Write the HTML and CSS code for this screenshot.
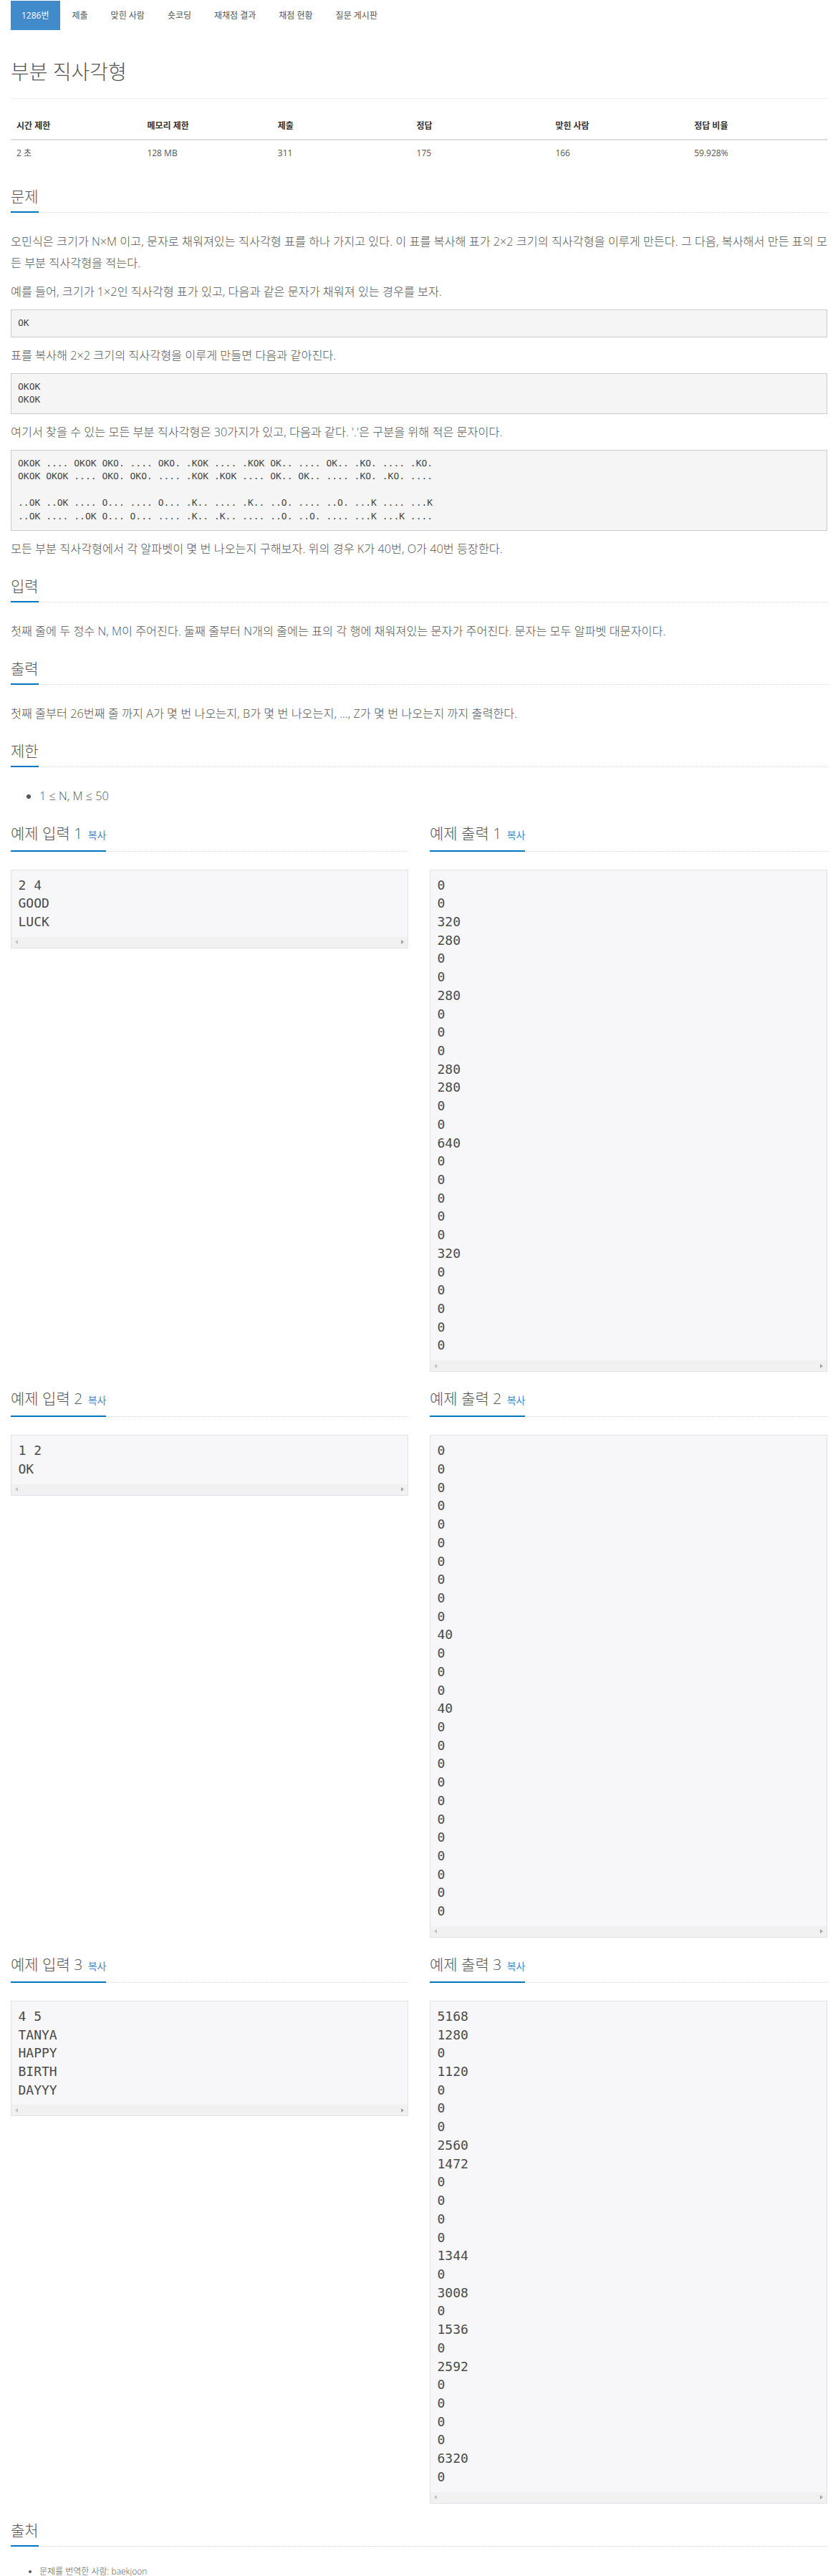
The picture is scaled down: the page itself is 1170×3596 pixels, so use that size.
FILE: index.html
```
<!DOCTYPE html>
<html lang="ko">
<head>
<meta charset="utf-8">
<title>부분 직사각형</title>
<link rel="stylesheet" href="styles.css">
</head>
<body>
<div class="container">
  <ul class="nav">
    <li class="active"><a>1286번</a></li>
    <li><a>제출</a></li>
    <li><a>맞힌 사람</a></li>
    <li><a>숏코딩</a></li>
    <li><a>재채점 결과</a></li>
    <li><a>채점 현황</a></li>
    <li><a>질문 게시판</a></li>
  </ul>

  <div class="page-header"><h1>부분 직사각형</h1></div>

  <table class="info">
    <thead>
      <tr><th class="w16">시간 제한</th><th class="w16">메모리 제한</th><th class="w17">제출</th><th class="w17">정답</th><th class="w17">맞힌 사람</th><th class="w17">정답 비율</th></tr>
    </thead>
    <tbody>
      <tr><td>2 초</td><td>128 MB</td><td>311</td><td>175</td><td>166</td><td>59.928%</td></tr>
    </tbody>
  </table>

  <section class="sec">
    <div class="headline"><h2>문제</h2></div>
    <div class="text">
      <p>오민식은 크기가 N×M 이고, 문자로 채워져있는 직사각형 표를 하나 가지고 있다. 이 표를 복사해 표가 2×2 크기의 직사각형을 이루게 만든다. 그 다음, 복사해서 만든 표의 모든 부분 직사각형을 적는다.</p>
      <p>예를 들어, 크기가 1×2인 직사각형 표가 있고, 다음과 같은 문자가 채워져 있는 경우를 보자.</p>
      <pre class="code">OK</pre>
      <p>표를 복사해 2×2 크기의 직사각형을 이루게 만들면 다음과 같아진다.</p>
      <pre class="code">OKOK
OKOK</pre>
      <p>여기서 찾을 수 있는 모든 부분 직사각형은 30가지가 있고, 다음과 같다. '.'은 구분을 위해 적은 문자이다.</p>
      <pre class="code">OKOK .... OKOK OKO. .... OKO. .KOK .... .KOK OK.. .... OK.. .KO. .... .KO.
OKOK OKOK .... OKO. OKO. .... .KOK .KOK .... OK.. OK.. .... .KO. .KO. ....

..OK ..OK .... O... .... O... .K.. .... .K.. ..O. .... ..O. ...K .... ...K
..OK .... ..OK O... O... .... .K.. .K.. .... ..O. ..O. .... ...K ...K ....</pre>
      <p>모든 부분 직사각형에서 각 알파벳이 몇 번 나오는지 구해보자. 위의 경우 K가 40번, O가 40번 등장한다.</p>
    </div>
  </section>

  <section class="sec">
    <div class="headline"><h2>입력</h2></div>
    <div class="text">
      <p>첫째 줄에 두 정수 N, M이 주어진다. 둘째 줄부터 N개의 줄에는 표의 각 행에 채워져있는 문자가 주어진다. 문자는 모두 알파벳 대문자이다.</p>
    </div>
  </section>

  <section class="sec">
    <div class="headline"><h2>출력</h2></div>
    <div class="text">
      <p>첫째 줄부터 26번째 줄 까지 A가 몇 번 나오는지, B가 몇 번 나오는지, ..., Z가 몇 번 나오는지 까지 출력한다.</p>
    </div>
  </section>

  <section class="sec">
    <div class="headline"><h2>제한</h2></div>
    <div class="text">
      <ul class="list"><li>1 ≤ N, M ≤ 50</li></ul>
    </div>
  </section>

  <div class="samples">
    <section class="sec">
      <div class="headline"><h2>예제 입력 1 <span class="copy">복사</span></h2></div>
      <div class="sample"><pre>2 4
GOOD
LUCK</pre><div class="sbar"><span class="al"></span><span class="ar"></span></div></div>
    </section>
    <section class="sec">
      <div class="headline"><h2>예제 출력 1 <span class="copy">복사</span></h2></div>
      <div class="sample"><pre>0
0
320
280
0
0
280
0
0
0
280
280
0
0
640
0
0
0
0
0
320
0
0
0
0
0</pre><div class="sbar"><span class="al"></span><span class="ar"></span></div></div>
    </section>

    <section class="sec">
      <div class="headline"><h2>예제 입력 2 <span class="copy">복사</span></h2></div>
      <div class="sample"><pre>1 2
OK</pre><div class="sbar"><span class="al"></span><span class="ar"></span></div></div>
    </section>
    <section class="sec">
      <div class="headline"><h2>예제 출력 2 <span class="copy">복사</span></h2></div>
      <div class="sample"><pre>0
0
0
0
0
0
0
0
0
0
40
0
0
0
40
0
0
0
0
0
0
0
0
0
0
0</pre><div class="sbar"><span class="al"></span><span class="ar"></span></div></div>
    </section>

    <section class="sec">
      <div class="headline"><h2>예제 입력 3 <span class="copy">복사</span></h2></div>
      <div class="sample"><pre>4 5
TANYA
HAPPY
BIRTH
DAYYY</pre><div class="sbar"><span class="al"></span><span class="ar"></span></div></div>
    </section>
    <section class="sec">
      <div class="headline"><h2>예제 출력 3 <span class="copy">복사</span></h2></div>
      <div class="sample"><pre>5168
1280
0
1120
0
0
0
2560
1472
0
0
0
0
1344
0
3008
0
1536
0
2592
0
0
0
0
6320
0</pre><div class="sbar"><span class="al"></span><span class="ar"></span></div></div>
    </section>
  </div>

  <section class="sec">
    <div class="headline"><h2>출처</h2></div>
    <ul class="source"><li>문제를 번역한 사람: baekjoon</li></ul>
  </section>
</div>
</body>
</html>
```

FILE: styles.css
```
* { box-sizing: border-box; }
html, body { margin: 0; padding: 0; background: #fff; }
body {
  font-family: "Open Sans", "Noto Sans CJK KR", sans-serif;
  color: #555;
  font-size: 16.25px;
  font-weight: 300;
}
.container { width: 1170px; padding: 1px 15px 0; }

.nav { list-style: none; margin: 0; padding: 0; display: flex; }
.nav li + li { margin-left: 2px; }
.nav a { display: block; padding: 10px 15px; font-size: 12px; line-height: 21px; color: #555; font-weight: 400; }
.nav li.active a { background: #428bca; color: #fff; }

.page-header { margin-top: 43px; padding-bottom: 22px; border-bottom: 1px solid #eee; margin-bottom: 20px; }
.page-header h1 { margin: 0; font-size: 28px; line-height: 30px; font-weight: 300; color: #555; }

.info { width: 100%; border-collapse: collapse; margin-bottom: 31px; font-size: 12px; }
.info th, .info td { text-align: left; padding: 8px; line-height: 20px; }
.info th { font-weight: 700; border-bottom: 2px solid #ddd; color: #333; }
.info td { color: #555; font-weight: 400; }
.w16 { width: 16%; }
.w17 { width: 17%; }

.sec { display: flow-root; margin-bottom: 16px; }
.headline { border-bottom: 1px dotted #d9d9d9; margin-bottom: 25px; }
.headline h2 {
  display: inline-block; margin: 0 0 -1px; padding-bottom: 10px;
  border-bottom: 2px solid #0076c0;
  font-size: 21px; line-height: 22px; font-weight: 300; color: #555;
}
.copy { font-size: 14px; color: #428bca; font-weight: 400; margin-left: 2px; }

.text p { margin: 0 0 10px; line-height: 30px; }
.code {
  margin: 0 0 10px; padding: 9px;
  background: #f5f5f5; border: 1px solid #ccc;
  font-family: "DejaVu Sans Mono", monospace; font-size: 13px; line-height: 18.57px; color: #444; font-weight: 400;
}
.list { margin: 0 0 10px; padding-left: 40px; line-height: 30px; }

.samples { display: grid; grid-template-columns: 1fr 1fr; column-gap: 30px; align-items: start; }
.sample { border: 1px solid #e1e1e8; background: #f7f7f9; margin-bottom: 10px; }
.sample pre {
  margin: 0; padding: 8px 9.5px;
  font-family: "DejaVu Sans Mono", monospace; font-size: 18px; line-height: 25.714px; color: #4a4a4a; font-weight: 400;
}
.sbar { height: 15px; background: #f1f1f1; display: flex; justify-content: space-between; align-items: center; padding: 0 5px; }
.al { width: 0; height: 0; border-top: 3.5px solid transparent; border-bottom: 3.5px solid transparent; border-right: 4px solid #c1c1c1; }
.ar { width: 0; height: 0; border-top: 3.5px solid transparent; border-bottom: 3.5px solid transparent; border-left: 4px solid #a3a3a3; }

.source { margin: 0 0 10px; padding-left: 40px; font-size: 12px; line-height: 20px; }
```
